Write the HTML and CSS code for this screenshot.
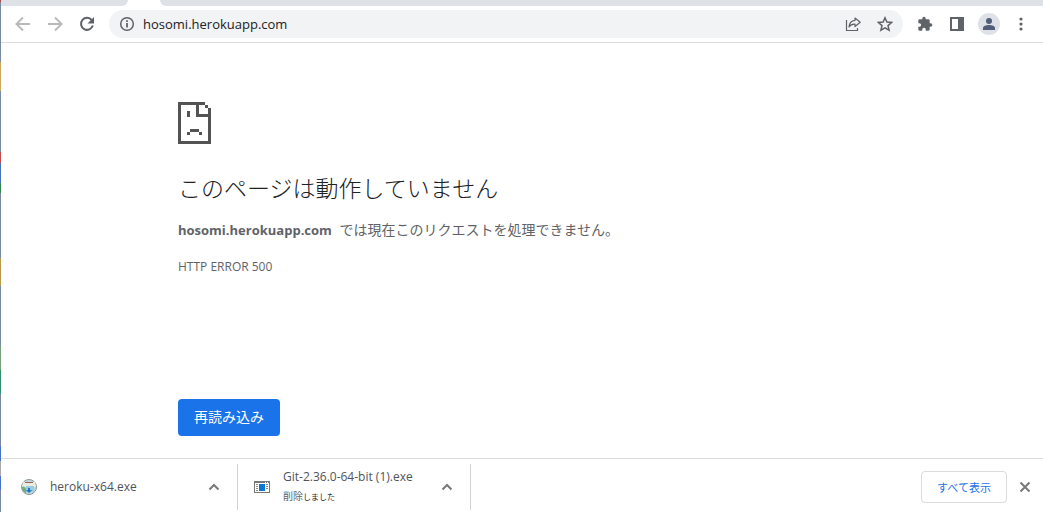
FILE: index.html
```
<!DOCTYPE html>
<html lang="ja">
<head>
<meta charset="utf-8">
<title>hosomi.herokuapp.com</title>
<link rel="stylesheet" href="styles.css">
</head>
<body>
<div class="desktop-edge"></div>
<div class="window">
  <div class="tab-strip"><div class="tab-before"></div><div class="tab-after"></div></div>
  <header class="toolbar">
    <nav class="nav">
      <button class="icon-button muted" aria-label="戻る"><svg width="16" height="16" viewBox="0 0 16 16"><path d="M15 8H2M8 1.500 1.500 8 8 14.500" fill="none" stroke="currentColor" stroke-width="2"/></svg></button>
      <button class="icon-button muted" aria-label="進む"><svg width="16" height="16" viewBox="0 0 16 16"><path d="M1 8h13M8 1.500 14.500 8 8 14.500" fill="none" stroke="currentColor" stroke-width="2"/></svg></button>
      <button class="icon-button" aria-label="再読み込み"><svg width="16" height="16" viewBox="0 0 16 16"><path d="M12.800 4.200A6 6 0 1 0 13.800 9.500" fill="none" stroke="currentColor" stroke-width="2"/><path d="M15 1v6.500H8.500z" fill="currentColor"/></svg></button>
    </nav>
    <div class="omnibox">
      <svg class="info" width="16" height="16" viewBox="0 0 16 16"><circle cx="8" cy="8" r="6.300" fill="none" stroke="currentColor" stroke-width="1.500"/><path d="M7.100 7h1.800v4.500H7.100zM7.100 4.300h1.800V6H7.100z" fill="currentColor"/></svg>
      <input class="address" type="text" value="hosomi.herokuapp.com" aria-label="アドレス">
      <button class="icon-button" aria-label="共有"><svg width="16" height="16" viewBox="0 0 16 16"><path d="M1.500 4v10.500h11V12" fill="none" stroke="currentColor" stroke-width="1.200"/><path d="M10 2l5.200 4.300L10 10.500V8.200C7 8 5.300 9 4 11 4.300 7.500 6.200 4.700 10 4.300z" fill="none" stroke="currentColor" stroke-width="1.200" stroke-linejoin="round"/></svg></button>
      <button class="icon-button" aria-label="ブックマーク"><svg width="16" height="16" viewBox="0 0 16 16"><path d="M8 1.800l1.900 4.300 4.700.4-3.600 3.100 1.100 4.600L8 11.800l-4.100 2.400L5 9.600 1.400 6.500l4.700-.4z" fill="none" stroke="currentColor" stroke-width="1.500"/></svg></button>
    </div>
    <div class="actions">
      <button class="icon-button" aria-label="拡張機能"><svg width="16" height="16" viewBox="0 0 24 24"><path fill="currentColor" d="M20.500 11H19V7c0-1.100-.9-2-2-2h-4V3.500a2.500 2.500 0 0 0-5 0V5H4c-1.100 0-2 .9-2 2v3.800h1.500a2.700 2.700 0 0 1 0 5.400H2V20c0 1.100.9 2 2 2h3.800v-1.500a2.700 2.700 0 0 1 5.400 0V22H17c1.100 0 2-.9 2-2v-4h1.500a2.500 2.500 0 0 0 0-5z"/></svg></button>
      <button class="icon-button" aria-label="サイドパネル"><svg width="16" height="16" viewBox="0 0 16 16"><path fill="currentColor" fill-rule="evenodd" d="M1 1h14v14H1zM3 3v10h6V3z"/></svg></button>
      <button class="icon-button profile" aria-label="プロフィール"><svg width="14" height="14" viewBox="0 0 14 14"><circle cx="7" cy="4" r="3" fill="currentColor"/><path d="M1 13v-2c0-2 3-3 6-3s6 1 6 3v2z" fill="currentColor"/></svg></button>
      <button class="icon-button" aria-label="メニュー"><svg width="16" height="16" viewBox="0 0 16 16" fill="currentColor"><circle cx="8" cy="3" r="1.600"/><circle cx="8" cy="8" r="1.600"/><circle cx="8" cy="13" r="1.600"/></svg></button>
    </div>
  </header>
  <main class="error-page">
    <svg class="sad-page" width="33" height="42" viewBox="0 0 11 14" shape-rendering="crispEdges"><path fill="currentColor" fill-rule="evenodd" d="M0 0h9v1H7v3h3V2h1v12H0zM1 1v12h9V5H6V1zM9 1h1v1H9zM3 3h1v2H3zM4 9h3v1H4zM3 10h1v1H3zM7 10h1v1H7z"/></svg>
    <h1 class="title">このページは動作していません</h1>
    <p class="summary"><strong>hosomi.herokuapp.com</strong> では現在このリクエストを処理できません。</p>
    <p class="code">HTTP ERROR 500</p>
    <button class="reload">再読み込み</button>
  </main>
  <footer class="downloads">
    <section class="download">
      <svg class="file-icon" width="18" height="18" viewBox="0 0 18 18"><circle cx="9" cy="9" r="7.500" fill="#c4d9dc" stroke="#8a9a98"/><path d="M3 4h12l1 5H2z" fill="#e9ece2"/><path d="M5 4h8v1H5z" fill="#a35d50"/><path d="M2 9c2-1 3 0 4 2v4C3 14 2 12 2 9z" fill="#75ad76"/><path d="M6 8h8v6H6z" fill="#9bcbe0"/><path d="M8 10h2v2h2l-3 3-3-3h2z" fill="#1f75cc"/></svg>
      <span class="file-text"><span class="file-name">heroku-x64.exe</span></span>
      <button class="icon-button chevron" aria-label="heroku-x64.exe のメニュー"><svg width="12" height="12" viewBox="0 0 12 12"><path d="M1.500 8.500 6 4l4.500 4.500" fill="none" stroke="currentColor" stroke-width="2"/></svg></button>
    </section>
    <section class="download">
      <svg class="file-icon" width="18" height="18" viewBox="0 0 18 18" shape-rendering="crispEdges"><path d="M1 3h16v12H1z" fill="#777"/><path d="M2 5h14v9H2z" fill="#fff"/><path d="M6 6h6v7H6z" fill="#0878d4"/><path d="M3 6h2v1H3zM3 8h2v1H3zM3 10h2v1H3zM3 12h2v1H3zM13 6h2v1h-2zM13 8h2v1h-2zM13 10h2v1h-2z" fill="#888"/><path d="M12 4h1v1h-1zM14 4h1v1h-1z" fill="#fff"/></svg>
      <span class="file-text"><span class="file-name">Git-2.36.0-64-bit (1).exe</span><span class="status">削除<span class="status-tail">しました</span></span></span>
      <button class="icon-button chevron" aria-label="Git-2.36.0-64-bit (1).exe のメニュー"><svg width="12" height="12" viewBox="0 0 12 12"><path d="M1.500 8.500 6 4l4.500 4.500" fill="none" stroke="currentColor" stroke-width="2"/></svg></button>
    </section>
    <div class="shelf-actions">
      <button class="show-all">すべて表示</button>
      <button class="icon-button close" aria-label="閉じる"><svg width="12" height="12" viewBox="0 0 12 12"><path d="M1.500 1.500l9 9M10.500 1.500l-9 9" fill="none" stroke="currentColor" stroke-width="2"/></svg></button>
    </div>
  </footer>
</div>
</body>
</html>
```

FILE: styles.css
```
* { box-sizing: border-box; }
body {
  display: flex;
  min-height: 100vh;
  margin: 0;
  background: #fff;
  color: #5f6368;
  font-family: "Open Sans", "Noto Sans CJK JP", sans-serif;
}
button, input { font-family: inherit; border: 0; padding: 0; background: none; color: inherit; }
svg { display: block; }
.desktop-edge {
  flex: none;
  width: 1px;
  background: linear-gradient(#b14848 0 2px, #78899d 2px 62px, #c9a95c 62px 91px, #78899d 91px 152px, #b94c4c 152px 163px, #4a70b8 163px 183px, #358450 183px 193px, #78899d 193px 258px, #b99a4c 258px 286px, #78899d 286px 346px, #75a278 346px 370px, #31906d 370px 394px, #78899d 394px 446px, #4774c5 446px 461px, #aaa 461px 476px, #4774c5 476px 490px, #78899d 490px);
}
.window { flex: 1; min-width: 0; display: flex; flex-direction: column; }
.tab-strip { display: flex; gap: 32px; height: 6px; }
.tab-before { width: 127px; background: #dee1e6; border-bottom-right-radius: 6px; }
.tab-after { flex: 1; background: #dee1e6; border-bottom-left-radius: 6px; }
.toolbar { display: flex; align-items: center; height: 37px; padding: 0 14px; border-bottom: 1px solid #dadce0; }
.nav { display: flex; gap: 16px; }
.icon-button { display: grid; place-items: center; flex: none; min-width: 16px; height: 16px; }
.muted { color: #bababc; }
.omnibox { display: flex; flex: 1; align-items: center; gap: 16px; height: 28px; margin: 0 14px; padding: 0 10px; border-radius: 14px; background: #f1f3f4; }
.info { margin-right: -8px; }
.address { flex: 1; min-width: 0; height: 24px; color: #202124; font-size: 13px; }
.actions { display: flex; align-items: center; gap: 13px; }
.actions .icon-button:first-child { margin-right: 3px; }
.profile { width: 22px; height: 22px; border-radius: 50%; background: #dee1e6; color: #535e78; }
.error-page { flex: 1; padding: 59px 24px 22px 177px; }
.sad-page { color: #535353; }
.title { margin: 26px 0 0; color: #202124; font-size: 23px; line-height: 36px; font-weight: 300; }
.summary { margin: 12px 0 0; font-size: 14px; line-height: 24px; }
.summary strong { margin-right: 4px; font-size: 13px; }
.code { margin: 15px 0 0; font-size: 12px; line-height: 20px; }
.reload { display: block; height: 37px; margin-top: 122px; padding: 0 16px 3px; border-radius: 4px; background: #1a73e8; color: #fff; font-size: 14px; }
.downloads { display: flex; align-items: center; height: 54px; padding-top: 2px; border-top: 1px solid #dadce0; }
.download { display: flex; align-items: center; height: 46px; width: 237px; padding: 0 15px 0 19px; border-right: 1px solid #d0d2d5; }
.download + .download { width: 233px; padding-left: 15px; }
.file-icon { flex: none; margin-right: 12px; }
.file-text { flex: 1; display: flex; flex-direction: column; white-space: nowrap; }
.file-name { font-size: 12px; line-height: 20px; color: #505357; }
.status { font-size: 10px; line-height: 18px; }
.status-tail { font-size: 8px; color: #202124; }
.chevron, .close { color: #77797c; }
.shelf-actions { display: flex; align-items: center; gap: 12px; margin-left: auto; padding-right: 12px; }
.show-all { width: 86px; height: 32px; border: 1px solid #dadce0; border-radius: 4px; color: #1a73e8; font-size: 11px; }
.close { min-width: 12px; }
```
